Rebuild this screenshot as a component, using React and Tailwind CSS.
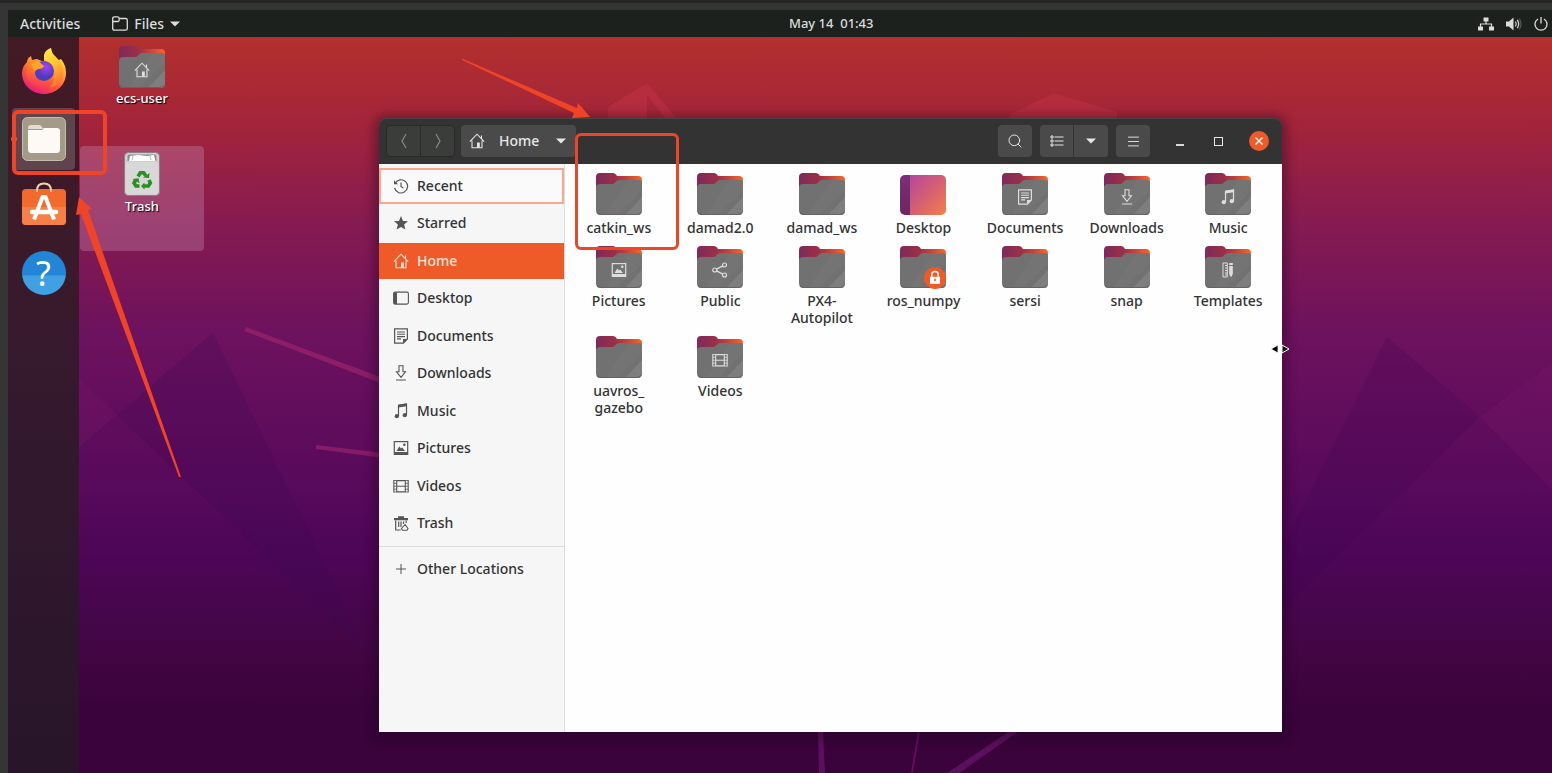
import React from 'react';
import { Search, Menu, Plus } from 'lucide-react';

/* ---------- small glyphs, shared by the sidebar and the folder emblems ---------- */

const GLYPHS = {
    recent: (
        <>
            <path d="M2.2 5.2A6.6 6.6 0 1 1 1.6 10" fill="none" stroke="currentColor" strokeWidth="1.2" />
            <path d="M1 2.2v4h4z" fill="currentColor" />
            <path d="M8 4.5V8.5l2.4 1.6" fill="none" stroke="currentColor" strokeWidth="1.2" />
        </>
    ),
    starred: <path d="M8 1l2 4.9 5 .4-3.9 3.3 1.3 5L8 11.9l-4.4 2.7 1.3-5L1 6.3l5-.4z" fill="currentColor" />,
    home: (
        <>
            <path d="M.8 8.6L8 1.2l7.2 7.4M12.5 5.6V2.5M3 7.5v7.3h10V7.5" fill="none" stroke="currentColor" strokeWidth="1.1" />
            <path d="M8 9.5h2.8v5.3H8z" fill="currentColor" />
        </>
    ),
    desktop: (
        <>
            <rect x=".6" y="2.1" width="14.8" height="12" rx="1.5" fill="none" stroke="currentColor" strokeWidth="1.1" />
            <path d="M1 2.5h3v11.5H1z" fill="currentColor" />
        </>
    ),
    documents: (
        <>
            <path d="M1.6.8h12.8v10.2l-4 4.2H1.6z" fill="none" stroke="currentColor" strokeWidth="1.2" />
            <path d="M10 15.2V11h4.4z" fill="currentColor" />
            <path d="M4 4h8M4 6.3h8M4 8.6h8M4 10.9h4" stroke="currentColor" strokeWidth="1.1" />
        </>
    ),
    downloads: (
        <path d="M6 .8h4v6h2.5L8 12.3 3.5 6.8H6zM3 15h10" fill="none" stroke="currentColor" strokeWidth="1.1" />
    ),
    music: (
        <>
            <path d="M5.5 13V2.2l8-1.2v11" fill="none" stroke="currentColor" strokeWidth="1.2" />
            <path d="M5.5 1.8l8-1.2v2.6l-8 1.2z" fill="currentColor" />
            <circle cx="3.8" cy="13.2" r="2.1" fill="currentColor" />
            <circle cx="11.8" cy="12.2" r="2.1" fill="currentColor" />
        </>
    ),
    pictures: (
        <>
            <rect x="1.3" y="1.6" width="13.4" height="12.8" fill="none" stroke="currentColor" strokeWidth="1.2" />
            <path d="M1.5 12h13v2.6h-13zM3.5 11l2.8-4.5 1.7 2 1.2-1L12 11z" fill="currentColor" />
            <circle cx="11.3" cy="4.8" r="1.3" fill="currentColor" />
        </>
    ),
    videos: (
        <>
            <path d="M3.7 2v12.5M12.3 2v12.5M.8 2v12.5M15.2 2v12.5M3.7 2.6h8.6M3.7 13.9h8.6M3.7 8.2h8.6" fill="none" stroke="currentColor" strokeWidth="1.1" />
            <path d="M1 2.5h2.5M1 5.3h2.5M1 8.2h2.5M1 11.2h2.5M1 14h2.5M12.5 2.5H15M12.5 5.3H15M12.5 8.2H15M12.5 11.2H15M12.5 14H15" stroke="currentColor" strokeWidth=".8" />
        </>
    ),
    trash: (
        <>
            <path d="M5 1.200h6V3h4v2.200H1V3h4z" fill="currentColor" />
            <path d="M2.7 5.500v9.500h5M13.200 5.500V8M5.700 6.500v5.500M8 6.500v5.500M10.500 6.500V9" fill="none" stroke="currentColor" strokeWidth="1.2" />
            <path d="M12 9.500l3 4-1 1.700h-4.500l-1-1.700z" fill="none" stroke="currentColor" strokeWidth="1.1" />
        </>
    ),
    share: (
        <g fill="none" stroke="currentColor" strokeWidth="1.2">
            <circle cx="2.8" cy="8" r="2" />
            <circle cx="12.5" cy="3" r="2" />
            <circle cx="12.5" cy="13" r="2" />
            <path d="M4.6 7.1l6.1-3.2M4.6 8.9l6.1 3.2" />
        </g>
    ),
    templates: (
        <>
            <path d="M3 1h4.300v14H3zM5 3.500h2M5 6h2M5 8.500h2M5 11h2M5 13h2" fill="none" stroke="currentColor" strokeWidth="1" />
            <path d="M9.200 3V1h3.600v2zM9.200 4h3.600v8L11 15.500 9.200 12z" fill="currentColor" />
        </>
    ),
};

const Glyph = ({ name, className }) => (
    <svg viewBox="0 0 16 16" className={className} aria-hidden="true">
        {GLYPHS[name]}
    </svg>
);

const Caret = ({ className }) => (
    <svg viewBox="0 0 10 6" className={className} aria-hidden="true">
        <path d="M0 .5h10L5 5.5z" fill="currentColor" />
    </svg>
);

/* ---------- file icons ---------- */

const FolderIcon = ({ glyph, locked }) => (
    <span className="relative block h-[42px] w-[46px]">
        <svg viewBox="0 0 46 42" className="block h-full w-full" aria-hidden="true">
            <defs>
                <linearGradient id="folderBack" x1="0" x2="1">
                    <stop offset="0" stopColor="#7c2a5c" />
                    <stop offset=".42" stopColor="#9b3046" />
                    <stop offset=".6" stopColor="#b83d40" />
                    <stop offset="1" stopColor="#f8672a" />
                </linearGradient>
            </defs>
            <path d="M4 0h13q2 0 3 1.500l1 1.500h21q4 0 4 4v12H0V4q0-4 4-4z" fill="url(#folderBack)" />
            <path d="M4 11h12q2 0 3-1.500l1-1Q21 7 23 7h19q4 0 4 4v26q0 5-4 5H4q-4 0-4-5V15q0-4 4-4z" fill="#717171" />
            <path d="M33 7h9q4 0 4 4v7L20 42H9z" fill="#757475" />
            <path d="M46 24v13q0 5-4 5H29z" fill="#7f7e7f" />
            <path d="M1 39q1 2 4 2.500h36q3-.5 4-2.500" fill="none" stroke="#636363" strokeWidth="1" />
        </svg>
        {glyph && <Glyph name={glyph} className="absolute top-4 left-[15px] size-4 text-[#dedede]" />}
        {locked && (
            <svg viewBox="0 0 22 22" className="absolute top-[21px] left-6 size-[22px]" aria-hidden="true">
                <circle cx="11" cy="11" r="11" fill="#ee5a28" />
                <path d="M7.8 10V7.8a3.2 3.2 0 0 1 6.4 0V10" fill="none" stroke="#fff" strokeWidth="1.5" />
                <path d="M6 9.800h10v7H6z" fill="#fff" />
                <path d="M11 11.800v2.500" stroke="#ee5a28" strokeWidth="1.6" />
            </svg>
        )}
    </span>
);

const DesktopIcon = () => (
    <span className="flex h-[42px] w-[46px] pt-0.5">
        <span className="block w-[10px] rounded-l-[5px] bg-linear-to-b from-[#7c2f78] to-[#6d2560]" />
        <span className="block flex-1 rounded-r-[5px] bg-linear-to-br from-[#b5459a] via-[#d65f70] to-[#f5803f]" />
    </span>
);

const TrashCan = () => (
    <svg viewBox="0 0 36 44" className="h-11 w-9" aria-hidden="true">
        <rect x=".5" y=".5" width="35" height="43" rx="4" fill="#cfcfcf" stroke="#8a7f84" />
        <rect x="1.500" y="10" width="33" height="32.500" rx="3" fill="#d8d8d8" />
        <path d="M3.500 9V4.500q0-2 2-2h25q2 0 2 2V9z" fill="#8d8d8d" />
        <path d="M5 9l1-5 8-1 9 1 7-1 1.500 6z" fill="#fff" />
        <path d="M8 8l1-4M27 8l-1-4" stroke="#bbb" strokeWidth="1" />
        <g fill="none" stroke="#2a8f22" strokeWidth="3.600">
            <path d="M14 24.500l2.300-3.700h3.400l2 3" />
            <path d="M25 28l1.300 3-2 3H20" />
            <path d="M15.500 34H12l-2-3 1.700-3" />
        </g>
        <path d="M19 25.500l6 .5.5-5zM20.500 30.500v7L17 34zM8.500 27l6-.8 1 5z" fill="#2a8f22" />
    </svg>
);

/* ---------- dock ---------- */

const FirefoxIcon = () => (
    <svg viewBox="0 0 44 46" className="h-[46px] w-11" aria-hidden="true">
        <defs>
            <linearGradient id="foxBody" x1=".8" y1="0" x2=".25" y2="1">
                <stop offset="0" stopColor="#fff44f" />
                <stop offset=".35" stopColor="#ffb02e" />
                <stop offset=".65" stopColor="#ff5a35" />
                <stop offset="1" stopColor="#e31587" />
            </linearGradient>
            <linearGradient id="foxFlame" x1="0" y1="0" x2=".3" y2="1">
                <stop offset="0" stopColor="#fff04a" />
                <stop offset=".5" stopColor="#ffc62e" />
                <stop offset="1" stopColor="#ff7a35" />
            </linearGradient>
            <linearGradient id="foxFace" x1=".6" y1="0" x2=".3" y2="1">
                <stop offset="0" stopColor="#ffa02c" />
                <stop offset=".5" stopColor="#ff6a33" />
                <stop offset="1" stopColor="#f52a62" />
            </linearGradient>
            <radialGradient id="foxGlobe" cx=".6" cy=".3">
                <stop offset="0" stopColor="#a246ee" />
                <stop offset="1" stopColor="#4f3bc0" />
            </radialGradient>
        </defs>
        <path d="M5 14q0-4 4-6l1 4 5-1 7 3V7q1-5 7-7 0 5 5 9l1 4 4-2q5 6 5 14c0 12-10 21-22 21S0 37 0 25q0-6 5-11z" fill="url(#foxBody)" />
        <path d="M22 12q-1-8 7-12 0 6 7 11 8 9 4 20-5 9-15 8 10-7 7-16-3-8-10-11z" fill="url(#foxFlame)" />
        <circle cx="22" cy="23" r="10" fill="url(#foxGlobe)" />
        <path d="M6 16q5-5 9-4l7 6q-1 3-6 3-3 1-3 5 2 8 10 8 6 0 9-3-1 9-10 10Q7 41 4 26z" fill="url(#foxFace)" />
        <path d="M9 16l6-3 7 5q-1 2-6 3l-4 2z" fill="#ffa42b" />
    </svg>
);

const FilesIcon = () => (
    <svg viewBox="0 0 44 44" className="size-11" aria-hidden="true">
        <rect x=".5" y=".5" width="43" height="43" rx="5" fill="#a39a87" stroke="#c4bdaf" />
        <path d="M6 13V11q0-3 3-3h8q2 0 3 2l1 2H6z" fill="#e3dcd3" />
        <path d="M6 13h14l2-2h13q3 0 3 3v18q0 4-3 4H9q-3 0-3-4z" fill="#fdf9f5" />
    </svg>
);

const SoftwareIcon = () => (
    <svg viewBox="0 0 44 44" className="size-11" aria-hidden="true">
        <rect y="7" width="44" height="36" rx="4" fill="#f4692c" />
        <path d="M0 25h44v14q0 4-4 4H4q-4 0-4-4z" fill="#f68048" />
        <path d="M15 10V8.500q0-7 7-7t7 7V10" fill="none" stroke="#f3d3a6" strokeWidth="2" />
        <path d="M12 37.500L20.500 15h3L32 37.500" fill="none" stroke="#fff" strokeWidth="4" />
        <path d="M10 30h24" stroke="#fff" strokeWidth="4.500" strokeLinecap="round" />
    </svg>
);

const HelpIcon = () => (
    <span className="flex size-11 items-center justify-center rounded-full bg-linear-to-b from-[#2285d6] from-55% to-[#3fa0e4] to-56% text-[34px] leading-none text-white">
        ?
    </span>
);

const Dock = () => (
    <nav aria-label="Dock" className="flex w-[71px] shrink-0 flex-col items-center bg-linear-to-b from-[#431a24] via-[#34192e] to-[#28152a]">
        <button aria-label="Firefox" className="flex h-[68px] items-center">
            <FirefoxIcon />
        </button>
        <div className="relative flex h-[68px] w-full items-center justify-center">
            <button aria-label="Files" className="flex h-[62px] w-[63px] items-center justify-center rounded-sm bg-[#5f434d]">
                <FilesIcon />
            </button>
            <span className="absolute left-[3px] size-1.5 rounded-full bg-[#e95420]" />
        </div>
        <button aria-label="Ubuntu Software" className="flex h-[62px] items-center">
            <SoftwareIcon />
        </button>
        <button aria-label="Help" className="flex h-[76px] items-center">
            <HelpIcon />
        </button>
    </nav>
);

/* ---------- top bar ---------- */

const TopBar = () => (
    <header className="grid h-[27px] grid-cols-[17fr_auto_15fr] items-center bg-[#1c211e] pl-3 text-sm font-medium text-[#dcdcdc]">
        <div className="flex items-center gap-8">
            <button>Activities</button>
            <button className="flex items-center gap-1.5">
                <svg viewBox="0 0 16 15" className="h-[15px] w-4" fill="none" stroke="currentColor" strokeWidth="1.3" aria-hidden="true">
                    <path d="M.7 12.500v-10Q.7.8 2.400.8h3.200Q7 .8 7.200 2.500h6.400q1.700 0 1.700 1.700v8.300q0 1.700-1.700 1.700H2.400q-1.700 0-1.700-1.700zM.7 5.500h5.500q1 0 1-1.500V2.500" />
                </svg>
                Files
                <Caret className="h-[6px] w-[10px]" />
            </button>
        </div>
        <button className="text-[13px] whitespace-pre">May 14  01:43</button>
        <div className="flex items-center justify-end gap-3 pr-1">
            <svg viewBox="0 0 16 14" className="h-[14px] w-4" fill="currentColor" aria-label="Network">
                <path d="M5.500.5h5v4h-5zM0 9.500h5v4H0zM11 9.500h5v4h-5z" />
                <path d="M8 4v3M2.500 10V7h11v3" fill="none" stroke="currentColor" strokeWidth="1.2" />
            </svg>
            <svg viewBox="0 0 16 14" className="h-[14px] w-4" fill="none" stroke="currentColor" strokeWidth="1.2" aria-label="Volume">
                <path d="M0 4.500h3L7.500.5v13L3 9.500H0z" fill="currentColor" stroke="none" />
                <path d="M9.500 4.500q1.500 2.500 0 5M11.300 2.800q2.800 4.200 0 8.400" />
                <path d="M13.200 1.500q3.600 5.500 0 11" opacity=".3" />
            </svg>
            <svg viewBox="0 0 14 14" className="size-[14px]" fill="none" stroke="currentColor" strokeWidth="1.3" aria-label="Power">
                <path d="M4 2a6 6 0 1 0 6 0M7 0v6.500" />
            </svg>
        </div>
    </header>
);

/* ---------- file manager ---------- */

const PLACES = ['Recent', 'Starred', 'Home', 'Desktop', 'Documents', 'Downloads', 'Music', 'Pictures', 'Videos', 'Trash'];

const FILES = [
    { name: 'catkin_ws' },
    { name: 'damad2.0' },
    { name: 'damad_ws' },
    { name: 'Desktop', desktop: true },
    { name: 'Documents', glyph: 'documents' },
    { name: 'Downloads', glyph: 'downloads' },
    { name: 'Music', glyph: 'music' },
    { name: 'Pictures', glyph: 'pictures' },
    { name: 'Public', glyph: 'share' },
    { name: 'PX4-\nAutopilot' },
    { name: 'ros_numpy', locked: true },
    { name: 'sersi' },
    { name: 'snap' },
    { name: 'Templates', glyph: 'templates' },
    { name: 'uavros_\ngazebo' },
    { name: 'Videos', glyph: 'videos' },
];

const rowStyle = (place) => {
    if (place === 'Recent') return 'border-2 border-[#f6a98f] bg-[#fafafa] text-[#333] px-3';
    if (place === 'Home') return 'bg-[#ee5a28] text-[#fbe6dd] px-3.5';
    return 'text-[#333] px-3.5';
};

const HeaderBar = () => (
    <div className="flex h-[46px] shrink-0 items-center rounded-t-lg bg-[#333] pr-[13px] pl-[7px] text-[#e6e6e6] inset-shadow-[0_1px_0_#454545]">
        <div className="flex h-8 divide-x divide-[#2a2a2a] rounded-sm border border-[#292929] bg-[#3b3d3b] text-[#8a8a8a]">
            <button aria-label="Back" className="flex w-[34px] items-center justify-center">
                <svg viewBox="0 0 6 16" className="h-4 w-1.5" fill="none" stroke="currentColor" strokeWidth="1.2"><path d="M5 1L1 8l4 7" /></svg>
            </button>
            <button aria-label="Forward" className="flex w-[33px] items-center justify-center">
                <svg viewBox="0 0 6 16" className="h-4 w-1.5" fill="none" stroke="currentColor" strokeWidth="1.2"><path d="M1 1l4 7-4 7" /></svg>
            </button>
        </div>
        <button className="ml-1.5 flex h-8 w-[115px] items-center rounded-sm bg-[#4a4a4a] pr-2.5 pl-2">
            <Glyph name="home" className="size-4" />
            <span className="ml-3.5">Home</span>
            <Caret className="ml-auto h-[6px] w-[10px]" />
        </button>
        <div className="ml-auto flex items-center gap-2">
            <button aria-label="Search" className="flex h-8 w-[34px] items-center justify-center rounded-sm bg-[#4a4a4a]">
                <Search size={16} strokeWidth={1.5} />
            </button>
            <div className="flex h-8 divide-x divide-[#333] rounded-sm bg-[#4a4a4a]">
                <button aria-label="List view" className="flex w-[34px] items-center justify-center">
                    <svg viewBox="0 0 14 12" className="h-3 w-3.5" fill="none" stroke="currentColor" strokeWidth="1.2">
                        <path d="M4.500 2h9M4.500 6h9M4.500 10h9" />
                        <path d="M1 1h2v2H1zM1 5h2v2H1zM1 9h2v2H1z" strokeWidth="1" />
                    </svg>
                </button>
                <button aria-label="View options" className="flex w-[34px] items-center justify-center">
                    <Caret className="h-[6px] w-[10px]" />
                </button>
            </div>
            <button aria-label="Menu" className="flex h-8 w-[34px] items-center justify-center rounded-sm bg-[#4a4a4a]">
                <Menu size={15} strokeWidth={1.5} />
            </button>
        </div>
        <div className="ml-[26px] flex items-center gap-[30px]">
            <button aria-label="Minimize" className="flex h-2.5 w-2 items-end border-b-2 border-[#d8d8d8]" />
            <button aria-label="Maximize" className="size-[9px] border border-[#e6e6e6]" />
            <button aria-label="Close" className="-ml-1 flex size-5 items-center justify-center rounded-full bg-[#ee5a28]">
                <svg viewBox="0 0 8 8" className="size-2" stroke="#fff" strokeWidth="1.4"><path d="M.5.5l7 7M7.500.5l-7 7" /></svg>
            </button>
        </div>
    </div>
);

const Sidebar = () => (
    <aside className="w-[186px] shrink-0 border-r border-[#dedede] bg-[#f6f6f6]">
        <ul className="grid h-[378px] auto-rows-fr pt-[3px]">
            {PLACES.map((place) => (
                <li key={place} className="flex items-center">
                    <button className={`flex h-9 w-full items-center gap-2 ${rowStyle(place)}`}>
                        <Glyph name={place.toLowerCase()} className={place === 'Home' ? 'size-4' : 'size-4 text-[#555]'} />
                        {place}
                    </button>
                </li>
            ))}
        </ul>
        <div className="mt-1 border-t border-[#dcdcdc] pt-1">
            <button className="flex h-9 w-full items-center gap-2 px-3.5 text-[#333]">
                <Plus size={16} strokeWidth={1.5} className="text-[#555]" />
                Other Locations
            </button>
        </div>
    </aside>
);

const FilesWindow = () => (
    <section className="absolute top-[81px] left-[300px] flex h-[614px] w-[903px] flex-col rounded-t-lg text-sm font-medium shadow-[0_2px_10px_6px_rgba(20,0,20,0.3)]">
        <HeaderBar />
        <div className="flex min-h-0 flex-1 bg-[#fefefe]">
            <Sidebar />
            <ul className="grid flex-1 grid-cols-7 content-start gap-y-2.5 px-[3px] pt-[9px] text-[#333]">
                {FILES.map((file) => (
                    <li key={file.name}>
                        <button className="flex w-full flex-col items-center gap-1">
                            {file.desktop ? <DesktopIcon /> : <FolderIcon glyph={file.glyph} locked={file.locked} />}
                            <span className="leading-[17px] whitespace-pre-line">{file.name}</span>
                        </button>
                    </li>
                ))}
            </ul>
        </div>
    </section>
);

/* ---------- wallpaper and mark-up ---------- */

const Wallpaper = () => (
    <svg viewBox="0 0 1473 736" preserveAspectRatio="none" className="absolute inset-0 h-full w-full" aria-hidden="true">
        <path d="M529 82V70l39-24v36z" fill="#c23248" opacity=".5" />
        <path d="M568 46l30 36h-11l-19-24z" fill="#c23248" opacity=".5" />
        <path d="M930 78l45-22 63 19v10H930z" fill="#c23248" opacity=".45" />
        <path d="M167 290l140 52v6L165 294zM237 408l68 8v5l-68-9z" fill="#b02a72" opacity=".5" />
        <path d="M134 296L38 378l250 238z" fill="#3a0750" opacity=".22" />
        <path d="M0 342l38 36-38 32z" fill="#8a1f70" opacity=".15" />
        <path d="M1308 300l93 80-197 192v-62z" fill="#3a0750" opacity=".2" />
        <path d="M1473 325l-72 55 72 73z" fill="#8a1f70" opacity=".15" />
        <path d="M739 694h5l2 42h-6zM839 694h2l-7 42h-2zM931 694h9l-60 42h-12z" fill="#8a1f8c" opacity=".45" />
    </svg>
);

const Annotations = () => (
    <div className="pointer-events-none absolute inset-0">
        <div className="absolute top-[107px] left-3 h-[65px] w-[95px] rounded-md border-4 border-[#ef4426]" />
        <div className="absolute top-[130px] left-[575px] h-[117px] w-[104px] rounded-md border-3 border-[#ef4426]" />
        <svg viewBox="0 3 600 480" width="600" height="480" className="absolute top-0 left-0" fill="#ef4426" aria-hidden="true">
            <path d="M462 58.500L577 108l1-5 12 14-18 1 2-5L462 60z" />
            <path d="M179 477L81 214l-5 1 3-18 13 12-4 1L181 477z" />
        </svg>
    </div>
);

const App = () => (
    <div className="relative flex h-screen flex-col overflow-hidden border-t-[3px] border-[#262626] bg-[#353535] pt-[7px] pl-2 font-['Noto_Sans',sans-serif]">
        <TopBar />
        <div className="flex min-h-0 flex-1">
            <Dock />
            <main className="relative flex-1 bg-[linear-gradient(180deg,#b3302d_0%,#a3243b_12%,#861b50_25%,#6d125e_40%,#5c0b5c_57%,#4d0658_70%,#430644_83%,#3a033b_92%,#3a033b_100%)]">
                <Wallpaper />
                <div className="absolute top-[9px] left-[3px] flex w-[120px] flex-col items-center gap-px text-[13px] font-medium text-white">
                    <FolderIcon glyph="home" />
                    <span className="[text-shadow:1px_1px_1px_#000]">ecs-user</span>
                </div>
                <div className="absolute top-[109px] left-px flex h-[105px] w-[124px] flex-col items-center gap-px rounded-sm bg-[#c88bb4]/35 pt-1.5 text-[13px] font-medium text-white">
                    <TrashCan />
                    <span className="[text-shadow:1px_1px_1px_#000]">Trash</span>
                </div>
                <FilesWindow />
                {/* resize pointer on the window's right edge */}
                <svg viewBox="0 0 20 10" className="absolute top-[307px] left-[1191px] h-2.5 w-5" aria-hidden="true">
                    <path d="M8 1v8L1 5z" fill="#000" stroke="#fff" strokeWidth=".8" />
                    <path d="M12 1v8l7-4z" fill="#111" stroke="#fff" strokeWidth="1" />
                </svg>
            </main>
        </div>
        <Annotations />
    </div>
);

export default App;
